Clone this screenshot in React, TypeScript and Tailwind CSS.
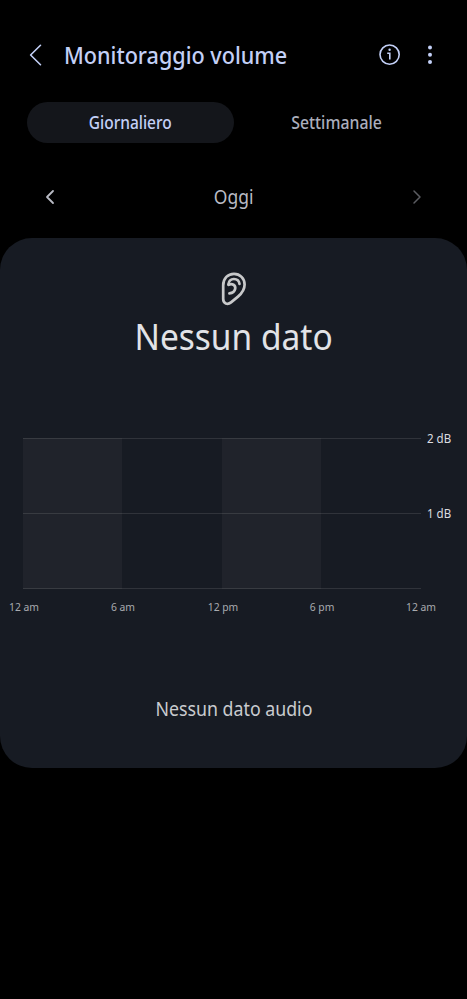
import { ChevronLeft, ChevronRight } from 'lucide-react';

const HOURS = ['12 am', '6 am', '12 pm', '6 pm', '12 am'];

function InfoIcon() {
  return (
    <svg width="22" height="22" viewBox="0 0 22 22" fill="none" stroke="currentColor" strokeWidth="1.6">
      <circle cx="10.6" cy="10.6" r="9.6" />
      <path d="M8.2 9.2h2.6v6.4" />
      <circle cx="10.6" cy="5.8" r="1.2" fill="currentColor" stroke="none" />
    </svg>
  );
}

function MoreIcon() {
  return (
    <svg width="6" height="20" viewBox="0 0 6 20" fill="currentColor">
      <circle cx="3" cy="2.6" r="2" />
      <circle cx="3" cy="9.8" r="2" />
      <circle cx="3" cy="17" r="2" />
    </svg>
  );
}

function EarIcon() {
  return (
    <svg width="26" height="34" viewBox="0 0 26 34" fill="none" stroke="currentColor" strokeWidth="2.7" strokeLinecap="round" strokeLinejoin="round">
      <path d="M2.2 13.4C2.2 6.2 7 1.8 13 1.8S23.6 6.4 23.6 12.6c0 5.6-2.4 8.6-6.6 12l-7 5.8c-3.4 2.8-7.8 1.2-7.8-3.4z" />
      <path d="M7.4 12.4c.4-3.4 2.5-5.4 5.5-5.4 3.1 0 5.2 1.9 5.6 4.9" />
      <path d="M7.6 12.8c3.6-1.8 7.2.4 6.6 4-.5 2.7-2.9 4.3-5.8 4.6" />
    </svg>
  );
}

export default function App() {
  return (
    <main className="h-[999px] w-[467px] overflow-hidden bg-black font-['Noto_Sans',sans-serif] text-[#b9bbc5]">
      {/* Header */}
      <header className="flex h-[102px] items-center pt-[7px] pr-[34px] pl-[29px] text-[#c3d0f7]">
        <svg width="14" height="22" viewBox="0 0 14 22" fill="none" stroke="currentColor" strokeWidth="1.6" strokeLinecap="round" strokeLinejoin="round">
          <path d="M11.5 1.3 1.6 11l9.9 9.7" />
        </svg>
        <h1 className="ml-[21px] flex-1 origin-left scale-x-[0.9] text-2xl font-medium whitespace-nowrap">
          Monitoraggio volume
        </h1>
        <InfoIcon />
        <span className="ml-[26px]">
          <MoreIcon />
        </span>
      </header>

      {/* Tabs */}
      <nav className="mx-[27px] grid h-[41px] grid-cols-2 text-center text-[18px] leading-[41px] font-medium">
        <button className="rounded-full bg-[#14161b] text-[#c3d0f7]">
          <span className="inline-block scale-x-[0.86]">Giornaliero</span>
        </button>
        <button className="text-[#abaebc]">
          <span className="inline-block scale-x-[0.88]">Settimanale</span>
        </button>
      </nav>

      {/* Day selector */}
      <div className="flex h-[95px] items-center justify-between px-[38px] pt-[13px]">
        <ChevronLeft size={24} strokeWidth={1.8} />
        <span className="scale-x-[0.92] text-[19px]">Oggi</span>
        <ChevronRight size={24} strokeWidth={1.5} className="text-[#5b5c61]" />
      </div>

      {/* Data card */}
      <section className="flex h-[530px] flex-col items-center rounded-[32px] bg-[#171b23]">
        <div className="mt-[34px] text-[#c8c9ca]">
          <EarIcon />
        </div>
        <h2 className="mt-[5px] scale-x-[0.93] text-[36px] leading-[52px] font-normal text-[#e2e3e7]">
          Nessun dato
        </h2>

        <div className="mt-[75px] flex w-full pl-[23px]">
          <div className="h-[151px] w-[398px]">
            <div className="grid h-full grid-cols-4 grid-rows-1 bg-[linear-gradient(#30333a,#30333a),linear-gradient(#30333a,#30333a),linear-gradient(#30333a,#30333a)] bg-[length:100%_1px] bg-[position:0_0,0_50%,0_100%] bg-no-repeat">
              <div className="mr-[0.5px] bg-white/4" />
              <div />
              <div className="mr-[0.5px] bg-white/4" />
              <div />
            </div>
          </div>
          <div className="-mt-[9px] ml-[6px] flex origin-left scale-x-[0.96] flex-col gap-[55px] text-[12px] leading-5 text-[#dcdde0]">
            <span>2 dB</span>
            <span>1 dB</span>
          </div>
        </div>
        <div className="mt-[8px] flex w-full justify-between pr-[22px] text-center text-[11px] leading-5 text-[#a9abaf]">
          {HOURS.map((hour, i) => (
            <span key={i} className="w-[48px] scale-x-[0.94]">
              {hour}
            </span>
          ))}
        </div>

        <p className="mt-[78px] scale-x-[0.935] text-[19px] leading-[28px] text-[#c9cbcf]">Nessun dato audio</p>
      </section>
    </main>
  );
}
